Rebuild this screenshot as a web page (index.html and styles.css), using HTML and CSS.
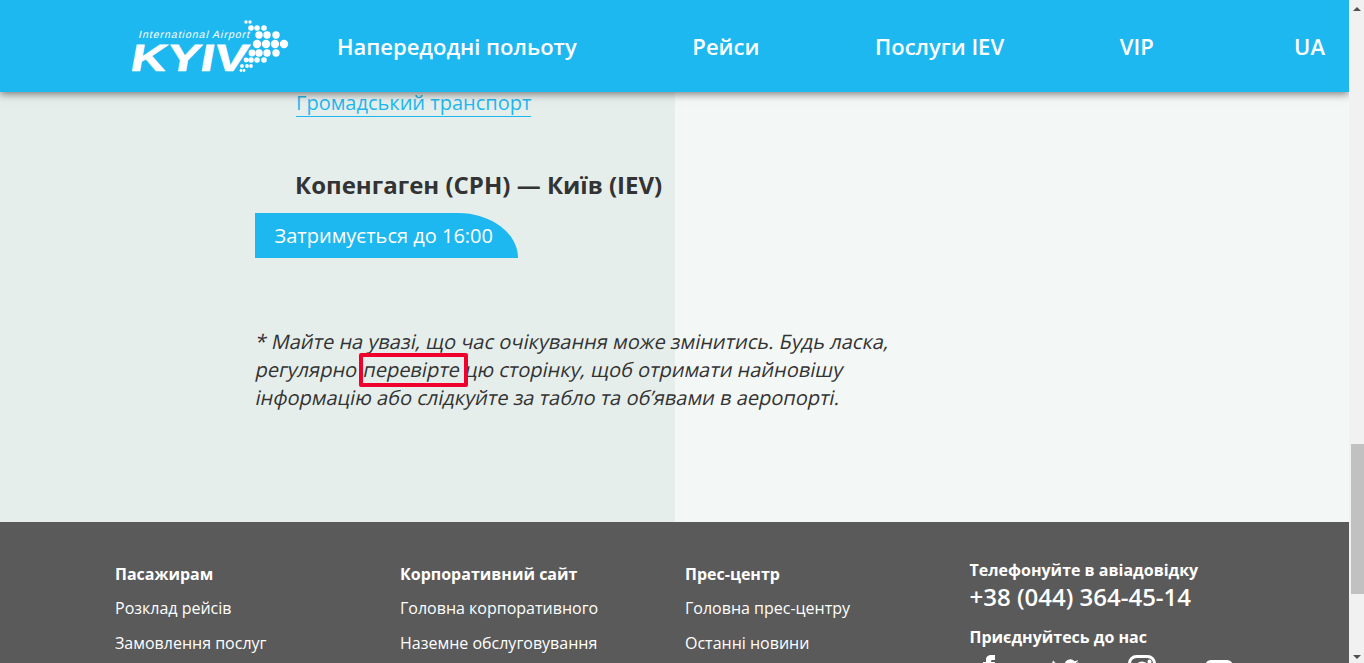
FILE: index.html
```html
<!DOCTYPE html>
<html>
<head>
	<title>Kyiv International Airport</title>
	<link rel="stylesheet" href="styles.css">
</head>
<body>
	<div class="page">
		<div class="main">
			<header class="head">
				<a class="logo" href="#">
					<svg width="170" height="92" viewBox="120 0 170 92">
						<text class="logo-small" x="0" y="0" transform="translate(138 38) skewX(-14)" textLength="111">International Airport</text>
						<text class="logo-big" x="0" y="0" transform="translate(129 71) skewX(-10)" textLength="117" lengthAdjust="spacingAndGlyphs">KYIV</text>
						<g fill="#fff">
							<circle cx="246" cy="22" r="1.7"/><circle cx="250" cy="22" r="1.7"/>
							<circle cx="251" cy="28" r="2.8"/><circle cx="257" cy="28" r="2.8"/><circle cx="264" cy="28" r="2.8"/>
							<circle cx="259" cy="35" r="3.7"/><circle cx="267" cy="35" r="3.7"/><circle cx="276" cy="35" r="3.7"/>
							<circle cx="257" cy="44" r="4.2"/><circle cx="266" cy="44" r="4.2"/><circle cx="275" cy="44" r="4.2"/><circle cx="284" cy="44" r="4.2"/>
							<circle cx="252" cy="53" r="3.4"/><circle cx="259" cy="53" r="3.7"/><circle cx="267" cy="53" r="3.7"/><circle cx="276" cy="53" r="3.7"/>
							<circle cx="246" cy="60" r="2.4"/><circle cx="251" cy="60" r="2.8"/><circle cx="257" cy="60" r="2.8"/><circle cx="264" cy="60" r="2.8"/>
							<circle cx="242" cy="66" r="1.9"/><circle cx="247" cy="66" r="1.9"/><circle cx="251" cy="66" r="1.9"/>
							<circle cx="241" cy="70.5" r="1.4"/><circle cx="244" cy="70.5" r="1.4"/>
						</g>
					</svg>
				</a>
				<nav class="menu">
					<a href="#">Напередодні польоту</a>
					<a href="#">Рейси</a>
					<a href="#">Послуги IEV</a>
					<a href="#">VIP</a>
					<a class="lang" href="#">UA</a>
				</nav>
			</header>
			<section class="content">
				<a class="transport" href="#">Громадський транспорт</a>
				<h3 class="route">Копенгаген (CPH) — Київ (IEV)</h3>
				<div class="status">Затримується до 16:00</div>
				<p class="note">
					<span class="line">* Майте на увазі, що час очікування може змінитись. Будь ласка,</span>
					<span class="line">регулярно <span class="mark">перевірте </span>цю сторінку, щоб отримати найновішу</span>
					<span class="line">інформацію або слідкуйте за табло та об’явами в аеропорті.</span>
				</p>
			</section>
			<footer class="foot">
				<div class="col">
					<h4>Пасажирам</h4>
					<a href="#">Розклад рейсів</a>
					<a href="#">Замовлення послуг</a>
				</div>
				<div class="col">
					<h4>Корпоративний сайт</h4>
					<a href="#">Головна корпоративного</a>
					<a href="#">Наземне обслуговування</a>
				</div>
				<div class="col">
					<h4>Прес-центр</h4>
					<a href="#">Головна прес-центру</a>
					<a href="#">Останні новини</a>
				</div>
				<div class="contact">
					<h4>Телефонуйте в авіадовідку</h4>
					<div class="phone">+38 (044) 364-45-14</div>
					<h4>Приєднуйтесь до нас</h4>
					<div class="social">
						<svg class="fb" width="12" height="30" viewBox="0 0 12 30"><path fill="#fff" d="M3 30V12H0V7h3V5c0-3.500 2-5 5.500-5H12v5H9.500C8.500 5 8 5.500 8 6.500V7h4l-.6 5H8v18z"/></svg>
						<svg class="tw" width="28" height="24" viewBox="0 0 30 26"><path fill="#fff" d="M30 3.400a12 12 0 0 1-3.500 1 6.200 6.200 0 0 0 2.700-3.400 12 12 0 0 1-3.900 1.500A6.100 6.100 0 0 0 14.800 8 17.400 17.400 0 0 1 2.100 1.600a6.100 6.100 0 0 0 1.900 8.200A6 6 0 0 1 1.200 9v.1a6.100 6.100 0 0 0 4.900 6 6 6 0 0 1-2.800.1 6.100 6.100 0 0 0 5.700 4.300A12.300 12.300 0 0 1 0 22a17.400 17.400 0 0 0 26.900-15.500A12 12 0 0 0 30 3.400z"/></svg>
						<svg width="28" height="28" viewBox="0 0 28 28"><rect x="1.500" y="1.500" width="25" height="25" rx="7" fill="none" stroke="#fff" stroke-width="3"/><circle cx="14" cy="14" r="6" fill="none" stroke="#fff" stroke-width="3"/><circle cx="21.500" cy="6.500" r="2" fill="#fff"/></svg>
						<svg class="yt" width="28" height="20" viewBox="0 0 30 22"><rect width="30" height="22" rx="6" fill="#fff"/><path fill="#5a5a5a" d="M12 6l8 5-8 5z"/></svg>
					</div>
				</div>
			</footer>
		</div>
		<div class="scrollbar"><div class="thumb"></div></div>
	</div>
</body>
</html>
```
FILE: styles.css
```css
*{
	margin: 0;
	padding: 0;
	box-sizing: border-box;
}
html,body{
	height: 663px;
	overflow: hidden;
}
body{
	font-family: "Open Sans", sans-serif;
	color: #333;
}
a{
	text-decoration: none;
}
.page{
	display: flex;
	height: 663px;
}
.main{
	width: 1349px;
}
.scrollbar{
	position: relative;
	width: 15px;
	background: #f1f1f1;
	padding: 444px 0 0 2px;
}
.scrollbar::before,
.scrollbar::after{
	content: "";
	position: absolute;
	left: 4px;
	border-left: 4px solid transparent;
	border-right: 4px solid transparent;
}
.scrollbar::before{
	top: 7px;
	border-bottom: 4px solid #505050;
}
.scrollbar::after{
	bottom: 4px;
	border-top: 4px solid #505050;
}
.thumb{
	height: 150px;
	background: #c1c1c1;
}
.head{
	position: relative;
	display: flex;
	align-items: center;
	height: 92px;
	padding-left: 120px;
	background: #1eb8f0;
	box-shadow: 0 2px 8px rgba(0,0,0,.5);
}
.logo{
	display: block;
	width: 170px;
	height: 92px;
}
.logo-small{
	font-family: "Liberation Sans", sans-serif;
	font-size: 10.500px;
	fill: #fff;
}
.logo-big{
	font-family: "Liberation Sans", sans-serif;
	font-size: 38px;
	font-weight: 700;
	fill: #fff;
	stroke: #fff;
	stroke-width: .6px;
}
.menu{
	display: flex;
	flex: 1;
	gap: 115.700px;
	padding: 0 24px 0 47px;
}
.menu a{
	font-size: 22px;
	font-weight: 600;
	color: #fff;
}
.menu .lang{
	margin-left: auto;
}
.content{
	height: 430px;
	padding: 0 0 0 255px;
	background: linear-gradient(to right, #e6eeec 675px, #f3f7f6 675px);
}
.transport{
	display: inline-block;
	margin-left: 41px;
	padding-bottom: 2px;
	font-size: 20px;
	line-height: 22px;
	color: #1eb8f0;
	border-bottom: 1px solid #1eb8f0;
}
.route{
	margin: 52px 0 12px 40px;
	font-size: 24px;
	line-height: 32px;
	font-weight: 700;
}
.status{
	width: 263px;
	height: 45px;
	padding-left: 19.500px;
	font-size: 20px;
	line-height: 45px;
	color: #fff;
	background: #1eb8f0;
	border-top-right-radius: 60px 45px;
}
.note{
	width: 650px;
	margin: 70px 0 0 1px;
	font-size: 20px;
	line-height: 28px;
}
/* the site's italic is a slanted regular, so skew each line */
.line{
	display: block;
	white-space: nowrap;
	width: max-content;
	transform: skewX(-12deg);
}
.mark{
	position: relative;
	margin-left: 1px;
}
.mark::after{
	content: "";
	position: absolute;
	left: -5px;
	right: -2px;
	top: -3px;
	bottom: -4px;
	border: 4px solid #f0002d;
	border-radius: 2px;
	transform: skewX(12deg);
}
.foot{
	display: flex;
	height: 141px;
	overflow: hidden;
	padding: 41px 0 0 115px;
	background: #5a5a5a;
	color: #fff;
}
.col{
	width: 285px;
	font-size: 16px;
}
.col h4{
	font-size: 16px;
	line-height: 22px;
	margin-bottom: 12px;
}
.col a{
	display: block;
	color: #fff;
	line-height: 22px;
	margin-bottom: 13px;
}
.contact{
	margin: -4px 0 0 -.500px;
}
.contact h4{
	font-size: 16px;
	line-height: 22px;
}
.phone{
	font-size: 24px;
	font-weight: 600;
	line-height: 32px;
	margin-bottom: 13px;
}
.social{
	display: flex;
	align-items: flex-start;
	gap: 49px;
	margin: 7px 0 0 13px;
}
.fb{
	margin-right: 7px;
}
.tw{
	margin-top: 4px;
}
.yt{
	margin-top: 5px;
}
```
